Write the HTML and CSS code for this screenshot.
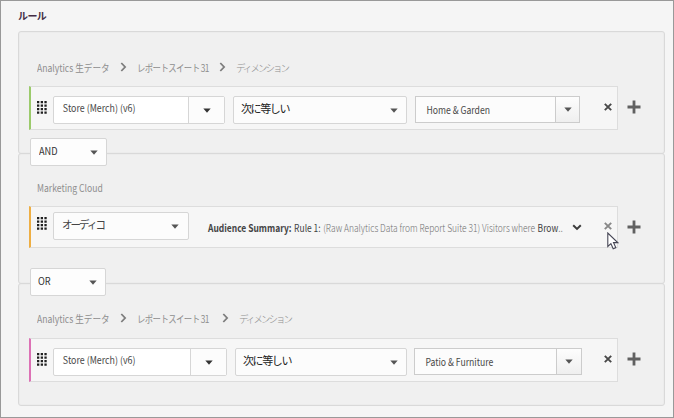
FILE: index.html
```html
<!DOCTYPE html>
<html lang="ja">
<head>
<meta charset="utf-8">
<title>ルール</title>
<link rel="stylesheet" href="styles.css">
</head>
<body>
<svg class="defs" width="0" height="0" aria-hidden="true">
  <symbol id="grip" viewBox="0 0 10 13"><path d="M0 0h2.3v2.3H0zM3.7 0H6v2.3H3.7zM7.4 0h2.3v2.3H7.4zM0 3.5h2.3v2.3H0zM3.7 3.5H6v2.3H3.7zM7.4 3.5h2.3v2.3H7.4zM0 7h2.3v2.3H0zM3.7 7H6v2.3H3.7zM7.4 7h2.3v2.3H7.4zM0 10.5h2.3v2.3H0zM3.7 10.5H6v2.3H3.7zM7.4 10.5h2.3v2.3H7.4z" fill="#202020"/></symbol>
  <symbol id="caret" viewBox="0 0 8 5"><path d="M.3.5h7.4L4 4.8z" fill="currentColor"/></symbol>
  <symbol id="chev" viewBox="0 0 7 10"><path d="M1.3 1l3.8 4-3.8 4" fill="none" stroke="#7d7d7d" stroke-width="1.8"/></symbol>
  <symbol id="down" viewBox="0 0 10 7"><path d="M1.2 1.2L5 4.9l3.8-3.7" fill="none" stroke="#3c3c3c" stroke-width="2"/></symbol>
  <symbol id="close" viewBox="0 0 8 8"><path d="M.8.8l6.4 6.4M7.2.8L.8 7.2" fill="none" stroke="currentColor" stroke-width="1.9"/></symbol>
  <symbol id="plus" viewBox="0 0 14 14"><path d="M7 .5v13M.5 7h13" fill="none" stroke="#606060" stroke-width="2.8"/></symbol>
</svg>
<main class="panel">
  <h1 class="title">ルール</h1>
  <section class="group first">
    <nav class="crumbs"><span class="c1">Analytics 生データ</span><svg class="chev"><use href="#chev"/></svg><span class="c2">レポートスイート 31</span><svg class="chev"><use href="#chev"/></svg><span class="c3">ディメンション</span></nav>
    <div class="line">
      <div class="rule green">
        <svg class="grip"><use href="#grip"/></svg>
        <div class="combo"><span class="value store">Store (Merch) (v6)</span><span class="drop"><svg class="caret"><use href="#caret"/></svg></span></div>
        <div class="select operator"><span class="equals">次に等しい</span><svg class="caret"><use href="#caret"/></svg></div>
        <div class="combo square"><span class="value">Home &amp; Garden</span><span class="drop"><svg class="caret"><use href="#caret"/></svg></span></div>
        <svg class="close"><use href="#close"/></svg>
      </div>
      <svg class="plus"><use href="#plus"/></svg>
    </div>
    <div class="select joiner"><span class="and">AND</span><svg class="caret"><use href="#caret"/></svg></div>
  </section>
  <section class="group second">
    <nav class="crumbs"><span class="c1">Marketing Cloud</span></nav>
    <div class="line">
      <div class="rule orange">
        <svg class="grip"><use href="#grip"/></svg>
        <div class="select audience"><span class="aud">オーディコ</span><svg class="caret"><use href="#caret"/></svg></div>
        <div class="summary"><b>Audience Summary:</b><span class="dark r1">Rule 1:</span><span class="light">(Raw Analytics Data from Report Suite 31) Visitors where</span><span class="dark">Brow</span><span class="dots">..</span></div>
        <svg class="down"><use href="#down"/></svg>
        <svg class="close hovered"><use href="#close"/></svg>
      </div>
      <svg class="plus"><use href="#plus"/></svg>
    </div>
    <div class="select joiner or"><span class="and">OR</span><svg class="caret"><use href="#caret"/></svg></div>
  </section>
  <section class="group third">
    <nav class="crumbs"><span class="c1">Analytics 生データ</span><svg class="chev"><use href="#chev"/></svg><span class="c2">レポートスイート 31</span><svg class="chev"><use href="#chev"/></svg><span class="c3">ディメンション</span></nav>
    <div class="line">
      <div class="rule pink">
        <svg class="grip"><use href="#grip"/></svg>
        <div class="combo"><span class="value store">Store (Merch) (v6)</span><span class="drop"><svg class="caret"><use href="#caret"/></svg></span></div>
        <div class="select operator"><span class="equals">次に等しい</span><svg class="caret"><use href="#caret"/></svg></div>
        <div class="combo square"><span class="value">Patio &amp; Furniture</span><span class="drop"><svg class="caret"><use href="#caret"/></svg></span></div>
        <svg class="close"><use href="#close"/></svg>
      </div>
      <svg class="plus"><use href="#plus"/></svg>
    </div>
  </section>
  <svg class="cursor" viewBox="0 0 12 18"><path d="M.8 1v13.4l3.1-2.8 2.3 5.1 2.6-1.1-2.3-5h4.2z" fill="#fff" stroke="#454554" stroke-width="1.1"/></svg>
</main>
</body>
</html>
```
FILE: styles.css
```css
* { box-sizing: border-box; }
body { margin: 0; font-family: "Noto Sans CJK JP", sans-serif; font-size: 10px; color: #555; }
svg { display: block; flex: none; }
.defs { position: absolute; }
span, b { white-space: nowrap; }
.panel { position: relative; width: 674px; height: 418px; border: 1px solid #999; background: #f5f5f5; padding: 8px 9px 0 17px; overflow: hidden; }
.title { margin: 0; height: 22px; font-size: 10px; line-height: 13px; font-weight: 700; color: #432c43; letter-spacing: -.6px; }
.group { position: relative; width: 647px; border: 1px solid #d9d9d9; border-radius: 3px; background: #f0f0f0; padding-left: 10px; box-shadow: inset 0 0 0 1px #ececec; }
.first { height: 123px; padding-top: 27px; }
.second { height: 131px; margin-top: -1px; padding-top: 25px; }
.third { height: 123px; margin-top: -1px; padding-top: 26px; }
.crumbs { display: flex; align-items: center; height: 16px; padding-left: 8px; color: #8e8e8e; font-size: 10px; }
.crumbs .chev { width: 7px; height: 10px; }
.c1, .c2, .c3, .value, .and, .summary, .aud { transform-origin: left center; }
.c1 { width: 83px; transform: scaleX(.86); }
.c2 { width: 82px; margin-left: 10px; letter-spacing: -.7px; transform: scaleX(.84); }
.c3 { margin-left: 10px; letter-spacing: -2px; font-weight: 300; transform: scaleX(.94); }
.line { display: flex; align-items: center; margin-top: 11px; }
.third .line { margin-top: 12px; }
.rule { display: flex; align-items: center; width: 589px; height: 44px; border: 1px solid #ddd; border-left-width: 2px; background: #f6f6f6; }
.green { border-left-color: #9bca6b; }
.orange { height: 42px; border-left-color: #eeae43; }
.pink { border-left-color: #dc71b5; }
.grip { width: 10px; height: 13px; margin: 0 6px 2px; }
.orange .grip { margin-bottom: 8px; }
.combo, .select { display: flex; align-items: center; height: 28px; border: 1px solid #d6d6d6; border-radius: 2px; background: #fcfcfc; }
.rule .combo, .operator { margin-top: 4px; }
.combo { width: 172px; background: #fff; }
.value { flex: 1; min-width: 0; padding-left: 10px; color: #484848; transform: scaleX(.865); }
.store { margin-top: -5px; transform: scaleX(.885); }
.drop { display: flex; flex: none; align-items: center; justify-content: center; align-self: stretch; width: 36px; border-left: 1px solid #d6d6d6; background: #fcfcfc; color: #333; }
.caret { width: 8px; height: 5px; }
.operator { width: 174px; margin-left: 8px; justify-content: space-between; padding: 0 8px 0 7px; }
.select { color: #555; }
.equals { font-size: 11px; color: #222; letter-spacing: -1.4px; margin-top: -5px; }
.rule .square { width: 165px; height: 27px; margin: 3px 0 0 8px; border-radius: 0; border-color: #ccc; background: #fcfcfc; }
.square .value { padding-left: 12px; }
.square .drop { width: 24px; border-color: #ccc; background: linear-gradient(#fdfdfd, #efefef); color: #555; }
.close { width: 8px; height: 8px; margin: 0 5px 3px auto; color: #484848; }
.hovered { color: #888; margin-bottom: 2px; }
.plus { width: 14px; height: 14px; margin: 0 0 2px 9px; }
.third .plus { margin-bottom: 2px; }
.second .plus { margin-bottom: 0; }
.third .combo:not(.square) { width: 174px; }
.third .operator { width: 172px; }
.third .square { width: 168px; margin-left: 7px; }
.third .square .drop { width: 25px; }
.third .c2 { width: 85px; }
.joiner { position: absolute; z-index: 2; left: 11px; top: 106px; width: 77px; justify-content: space-between; padding: 0 8px; background: #fdfdfd; }
.or { top: 114px; width: 76px; padding-left: 7px; }
.and { color: #333; margin-top: -4px; transform: scaleX(.92); }
.audience { width: 136px; margin-bottom: 2px; justify-content: space-between; padding: 0 9px 0 8px; }
.aud { font-size: 11px; letter-spacing: -2px; color: #444; margin-top: -4px; transform: scaleX(.95); }
.summary { display: flex; flex: none; gap: 3px; margin: 0 0 0 19px; width: 356px; transform: scaleX(.846); }
.summary b { color: #444; }
.light { font-weight: 300; color: #707070; }
.dark { color: #3f3f3f; }
.dots { margin-left: -3px; color: #888; }
.down { width: 10px; height: 7px; margin-left: 8px; }
.cursor { position: absolute; z-index: 3; left: 606px; top: 231px; width: 12px; height: 18px; }
```
